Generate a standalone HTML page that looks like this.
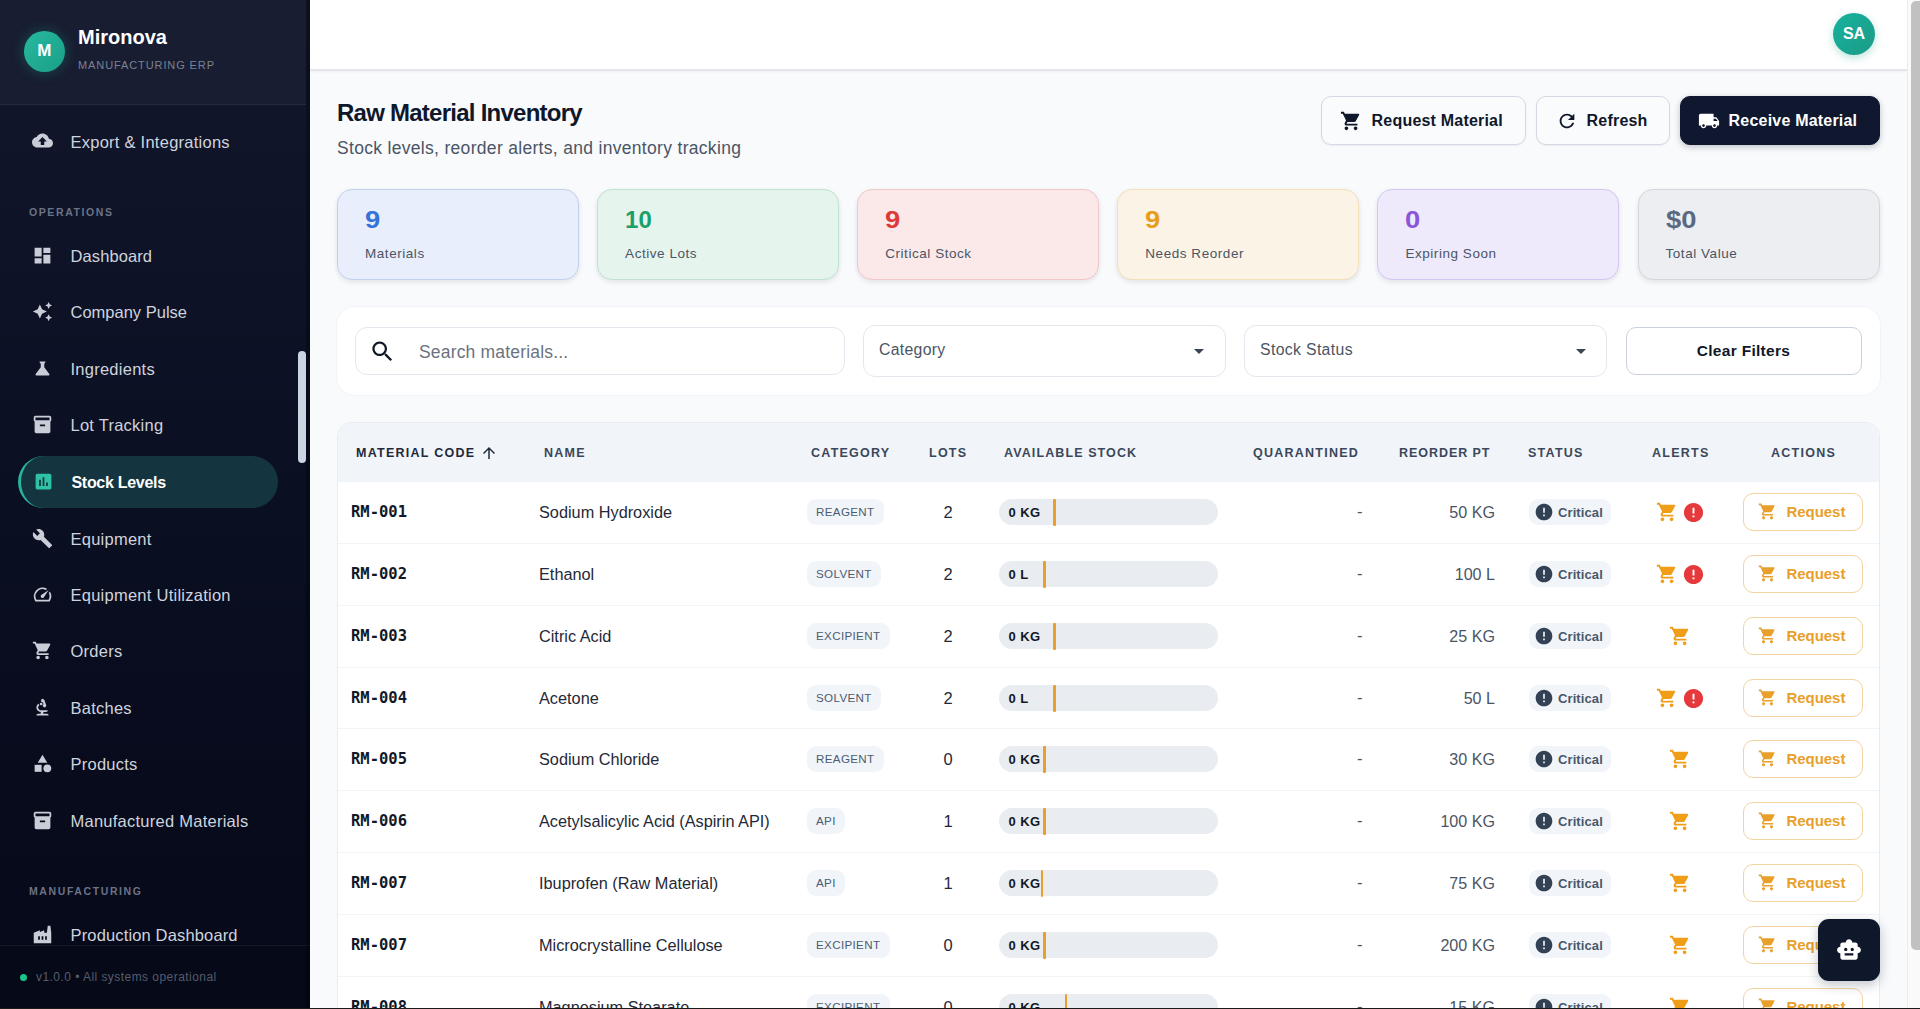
<!DOCTYPE html>
<html lang="en">
<head>
<meta charset="utf-8">
<title>Mironova - Raw Material Inventory</title>
<style>
*{box-sizing:border-box;margin:0;padding:0}
html,body{width:1920px;height:1009px;overflow:hidden;background:#f8fafc;font-family:"Liberation Sans",sans-serif;color:#0f172a}
svg{display:block}
.abs{position:absolute}
/* sidebar */
#side{position:absolute;left:0;top:0;width:309.5px;height:1009px;background:linear-gradient(180deg,#13182c 0%,#10152a 12%,#0d1226 30%,#080c1e 70%,#050918 100%);overflow:hidden}
#side:after{content:"";position:absolute;right:0;top:0;width:3.5px;height:1009px;background:rgba(0,0,0,.28)}
#side .hdr{position:absolute;left:0;top:0;width:306px;height:105px;background:#181d31;border-bottom:1.5px solid #232a3e}
#logo{position:absolute;left:24px;top:31px;width:40.5px;height:40.5px;border-radius:50%;background:linear-gradient(135deg,#27b9a0,#1a9f88);box-shadow:0 0 14px rgba(31,168,144,.35);color:#fff;font-weight:700;font-size:17px;line-height:40px;text-align:center}
#brand{position:absolute;left:78px;top:25px;font-size:20px;font-weight:700;color:#fff;line-height:24px;letter-spacing:0}
#brandsub{position:absolute;left:78px;top:58px;font-size:11px;color:#7a8296;line-height:14px;letter-spacing:.9px}
.nav{position:absolute;left:0;width:310px;height:52px}
.nav svg{position:absolute;left:31.5px;top:15px;width:21px;height:21px;fill:#c9cdd8}
.nav span{position:absolute;left:70.5px;top:14px;font-size:16.5px;line-height:24px;color:#cfd3dd;white-space:nowrap;letter-spacing:.25px}
.nav.act{left:18px;width:260px;border-radius:26px;background:#14353f;border-left:3px solid #2bb3a0}
.nav.act svg{left:12px;fill:#2fc2a6}
.nav.act span{left:50.5px;top:15px;color:#fff;font-weight:700;font-size:16px;letter-spacing:-.3px}
.sect{position:absolute;left:29px;font-size:10.5px;letter-spacing:1.6px;color:#6b7386;line-height:12px;font-weight:700}
#sfoot{position:absolute;left:0;top:945px;width:310px;height:64px;background:#060917;border-top:1px solid #141a2c}
#sfoot i{position:absolute;left:20px;top:28px;width:7px;height:7px;border-radius:50%;background:#19c58a}
#sfoot span{position:absolute;left:36px;top:24px;font-size:12px;line-height:14px;color:#555c6e;letter-spacing:.45px}
#sscroll{position:absolute;left:298px;top:351px;width:8px;height:112px;border-radius:4px;background:#cbd5e1}
/* topbar */
#top{position:absolute;left:310px;top:0;width:1597px;height:70.5px;background:#fff;border-bottom:2px solid #e4e6ea;box-shadow:0 1px 2px rgba(15,23,42,.04)}
#ava{position:absolute;left:1833px;top:12.5px;width:42px;height:42px;border-radius:50%;background:linear-gradient(135deg,#17b29c,#1b9b88);color:#fff;font-weight:700;font-size:16px;line-height:42px;text-align:center;box-shadow:0 3px 8px rgba(31,168,144,.3)}
#pscroll{position:absolute;left:1907px;top:0;width:13px;height:1009px;background:#fafafa;border-left:1px solid #ececec}
#pscroll i{position:absolute;left:3px;top:1px;width:10px;height:949px;border-radius:5px 0 0 5px;background:#c1c1c1}
/* heading */
h1{position:absolute;left:337px;top:97px;font-size:24px;line-height:32px;font-weight:700;letter-spacing:-.75px;color:#0f172a;white-space:nowrap}
#sub{position:absolute;left:337px;top:136px;font-size:17.5px;line-height:24px;color:#4b5565;white-space:nowrap;letter-spacing:.31px}
.btn{position:absolute;top:96px;height:48.5px;border-radius:10px;border:1.5px solid #d3d8e2;background:#fafbfd;box-shadow:0 1px 2px rgba(15,23,42,.05);font-size:16px;font-weight:700;color:#0f172a;line-height:47px;white-space:nowrap;letter-spacing:.2px}
.btn svg{position:absolute;top:12.5px;width:22px;height:22px;fill:#0f172a}
.btn span{position:absolute;margin-left:.6px}
.btn.dark{background:#101830;border-color:#101830;color:#fff;box-shadow:0 2px 6px rgba(15,23,42,.25)}
.btn.dark svg{fill:#fff}

/* cards */
.card{position:absolute;top:189px;width:242px;height:91px;border-radius:15px;border:1.5px solid;box-shadow:0 2px 5px rgba(15,23,42,.10)}
.card b{position:absolute;left:27px;top:15px;font-size:24px;line-height:30px;font-weight:700;transform:scaleX(1.14);transform-origin:0 50%}
.card span{position:absolute;left:27px;top:55px;font-size:13.5px;line-height:18px;color:#4b5565;letter-spacing:.55px;white-space:nowrap}
/* filters */
#filt{position:absolute;left:337px;top:307px;width:1543px;height:88px;border-radius:18px;background:#fff;box-shadow:0 0 0 1px rgba(226,232,240,.35)}
.inp{position:absolute;border:1px solid #e3e7ee;border-radius:12px;background:#fff}
.inp span{position:absolute;white-space:nowrap}
.inp svg{position:absolute}
/* table */
#tbl{position:absolute;left:337px;top:422px;width:1543px;height:600px;border-radius:14px 14px 0 0;background:#fff;border:1px solid #e8ecf2;overflow:hidden}
#thead{position:absolute;left:0;top:0;width:1543px;height:58.5px;background:#f1f5f9}
#thead span{position:absolute;top:22.5px;font-size:12.5px;line-height:14px;font-weight:700;letter-spacing:1.25px;color:#3b475a;white-space:nowrap}
#thead svg{position:absolute;left:142px;top:20.500px;width:18px;height:18px;fill:#1e293b}
.row{position:absolute;left:0;width:1543px;height:63px;border-bottom:1px solid #f1f4f8}
.row>*{position:absolute;white-space:nowrap}
.code{left:13px;top:21px;font-family:"DejaVu Sans Mono","Liberation Mono",monospace;font-weight:700;font-size:15.5px;line-height:20px;color:#111827}
.name{left:201px;top:20px;font-size:16.3px;line-height:22px;color:#1f2937;letter-spacing:0}
.cat{left:468.5px;top:18px;height:26px;border-radius:9px;background:#f1f5f9;padding:0 9.5px;font-size:11.6px;line-height:26px;color:#4b5b70;letter-spacing:.35px}
.lots{left:590px;width:40px;top:20px;text-align:center;font-size:16.5px;line-height:22px;color:#1f2937}
.bar{left:661px;top:18px;width:219px;height:26px;border-radius:13px;background:#e9ecf0}
.bar b{position:absolute;left:9.500px;top:.5px;font-size:13px;line-height:26px;font-weight:700;color:#111827;letter-spacing:.4px}
.bar i{position:absolute;top:-.5px;width:2.5px;height:27px;border-radius:1px;background:#e8a02b}
.q{left:1014.5px;width:10px;top:19px;text-align:right;font-size:16.5px;line-height:22px;color:#4b5565}
.ro{left:1037px;width:120px;top:20px;text-align:right;font-size:16.1px;line-height:22px;color:#4b5565}
.st{left:1191px;top:18px;width:82px;height:26px;border-radius:9px;background:#f1f5f9}
.st svg{position:absolute;left:4.500px;top:3px;width:20px;height:20px;fill:#334155}
.st span{position:absolute;left:29px;top:1px;font-size:13px;line-height:26px;color:#4a576a;font-weight:700;letter-spacing:.1px}
.al{top:20px;width:22px;height:22px}
.rq{left:1405px;top:12.300px;width:120px;height:37.500px;border-radius:10px;border:1.5px solid #f3d3a0;background:#fff}
.rq svg{position:absolute;left:13.700px;top:8px;width:19px;height:19px;fill:#e8a02b}
.rq span{position:absolute;left:42.500px;top:1px;font-size:15px;line-height:34.500px;font-weight:700;color:#e8a02b;letter-spacing:-.05px}
#fab{position:absolute;left:1818px;top:919px;width:62px;height:62px;border-radius:11px;background:#0f172a;box-shadow:0 4px 12px rgba(15,23,42,.25)}
#fab svg{position:absolute;left:18px;top:18px;width:26px;height:26px;fill:#fff}
#bot{position:absolute;left:0;top:1007.5px;width:1920px;height:1.500px;background:#1a1a1a}
</style>
</head>
<body>
<div id="side">
  <div class="hdr">
    <div id="logo">M</div>
    <div id="brand">Mironova</div>
    <div id="brandsub">MANUFACTURING ERP</div>
  </div>
  <div class="nav" style="top:115px"><svg viewBox="0 0 24 24"><path d="M19.35 10.04C18.67 6.59 15.64 4 12 4 9.11 4 6.6 5.64 5.35 8.04 2.34 8.36 0 10.91 0 14c0 3.31 2.69 6 6 6h13c2.76 0 5-2.24 5-5 0-2.64-2.05-4.78-4.65-4.96zM14 13v4h-4v-4H7l5-5 5 5h-3z"/></svg><span style="top:15px">Export &amp; Integrations</span></div>
  <div class="sect" style="top:206px">OPERATIONS</div>
  <div class="nav" style="top:230px"><svg viewBox="0 0 24 24"><path d="M3 13h8V3H3v10zm0 8h8v-6H3v6zm10 0h8V11h-8v10zm0-18v6h8V3h-8z"/></svg><span style="letter-spacing:.1px">Dashboard</span></div>
  <div class="nav" style="top:286px"><svg viewBox="0 0 24 24"><path d="M19 9l1.25-2.75L23 5l-2.75-1.25L19 1l-1.25 2.75L15 5l2.75 1.25L19 9zm-7.5.5L9 4 6.5 9.5 1 12l5.5 2.5L9 20l2.5-5.5L17 12l-5.5-2.5zM19 15l-1.25 2.75L15 19l2.75 1.25L19 23l1.25-2.75L23 19l-2.75-1.25L19 15z"/></svg><span style="letter-spacing:0">Company Pulse</span></div>
  <div class="nav" style="top:343px"><svg viewBox="0 0 24 24"><path d="M19.8 18.4L14 10.67V6.5l1.35-1.69c.26-.33.03-.81-.39-.81H9.04c-.42 0-.65.48-.39.81L10 6.5v4.17L4.2 18.4c-.49.66-.02 1.6.8 1.6h14c.82 0 1.29-.94.8-1.6z"/></svg><span>Ingredients</span></div>
  <div class="nav" style="top:399px"><svg viewBox="0 0 24 24"><path d="M20 2H4c-1 0-2 .9-2 2v3.010c0 .72.43 1.340 1 1.690V20c0 1.100 1.100 2 2 2h14c.9 0 2-.9 2-2V8.700c.57-.350 1-.970 1-1.690V4c0-1.100-1-2-2-2zm-5 12H9v-2h6v2zm5-7H4V4h16v3z"/></svg><span>Lot Tracking</span></div>
  <div class="nav act" style="top:456px"><svg viewBox="0 0 24 24"><path d="M19 3H5c-1.100 0-2 .9-2 2v14c0 1.100.9 2 2 2h14c1.100 0 2-.9 2-2V5c0-1.100-.9-2-2-2zM9 17H7v-7h2v7zm4 0h-2V7h2v10zm4 0h-2v-4h2v4z"/></svg><span>Stock Levels</span></div>
  <div class="nav" style="top:513px"><svg viewBox="0 0 24 24"><path d="M22.700 19l-9.100-9.100c.9-2.300.4-5-1.500-6.900-2-2-5-2.400-7.400-1.300L9 6 6 9 1.600 4.700C.4 7.100.9 10.100 2.900 12.100c1.900 1.900 4.600 2.400 6.900 1.500l9.100 9.100c.4.4 1 .4 1.400 0l2.300-2.300c.5-.4.5-1.100.1-1.400z"/></svg><span>Equipment</span></div>
  <div class="nav" style="top:569px"><svg viewBox="0 0 24 24"><path d="M20.380 8.570l-1.230 1.850a8 8 0 0 1-.22 7.580H5.070A8 8 0 0 1 15.580 6.850l1.850-1.230A10 10 0 0 0 3.350 19a2 2 0 0 0 1.720 1h13.850a2 2 0 0 0 1.740-1 10 10 0 0 0-.27-10.440zm-9.790 6.840a2 2 0 0 0 2.830 0l5.660-8.490-8.490 5.660a2 2 0 0 0 0 2.830z"/></svg><span>Equipment Utilization</span></div>
  <div class="nav" style="top:625px"><svg viewBox="0 0 24 24"><path d="M7 18c-1.100 0-1.990.9-1.990 2S5.900 22 7 22s2-.9 2-2-.9-2-2-2zM1 2v2h2l3.600 7.590-1.350 2.450c-.16.28-.25.61-.25.96 0 1.100.9 2 2 2h12v-2H7.420c-.14 0-.25-.11-.25-.25l.03-.12.9-1.630h7.450c.75 0 1.410-.41 1.750-1.030l3.580-6.490c.08-.14.12-.31.12-.48 0-.55-.45-1-1-1H5.210l-.94-2H1zm16 16c-1.100 0-1.990.9-1.990 2s.89 2 1.990 2 2-.9 2-2-.9-2-2-2z"/></svg><span>Orders</span></div>
  <div class="nav" style="top:682px"><svg viewBox="0 0 24 24"><path d="M7 19c-1.100 0-2 .9-2 2h14c0-1.100-.9-2-2-2h-4v-2h3c1.100 0 2-.9 2-2h-8c-1.660 0-3-1.340-3-3 0-1.090.59-2.040 1.460-2.560C8.170 9.030 8 8.540 8 8c0-.21.04-.42.09-.62C6.280 8.130 5 9.920 5 12c0 2.760 2.240 5 5 5v2H7z"/><path d="M10.560 5.510C11.910 5.540 13 6.640 13 8c0 .75-.33 1.410-.85 1.870l.59 1.620.94-.34.34.94 1.880-.68-.34-.94.94-.34-2.740-7.520-.94.34-.34-.94-1.880.68.340.94-.94.340.56 1.540z"/><circle cx="10.500" cy="8" r="1.500"/></svg><span>Batches</span></div>
  <div class="nav" style="top:738px"><svg viewBox="0 0 24 24"><path d="M12 2l-5.500 9h11z"/><circle cx="17.500" cy="17.500" r="4.500"/><path d="M3 13.500h8v8H3z"/></svg><span>Products</span></div>
  <div class="nav" style="top:795px"><svg viewBox="0 0 24 24"><path d="M20 2H4c-1 0-2 .9-2 2v3.010c0 .72.43 1.340 1 1.690V20c0 1.100 1.100 2 2 2h14c.9 0 2-.9 2-2V8.700c.57-.350 1-.970 1-1.690V4c0-1.100-1-2-2-2zm-5 12H9v-2h6v2zm5-7H4V4h16v3z"/></svg><span>Manufactured Materials</span></div>
  <div class="sect" style="top:885px">MANUFACTURING</div>
  <div class="nav" style="top:909px"><svg viewBox="0 0 24 24"><path d="M22 22H2V10l7-3v2l5-2v3h3l1-8h3l1 8v12zM17 14h-2v4h2v-4zm-4 0h-2v4h2v-4zm-4 0H7v4h2v-4z"/></svg><span style="letter-spacing:.15px">Production Dashboard</span></div>
  <div id="sscroll"></div>
  <div id="sfoot"><i></i><span>v1.0.0 • All systems operational</span></div>
</div>

<div id="top"></div>
<div id="ava">SA</div>

<h1>Raw Material Inventory</h1>
<div id="sub">Stock levels, reorder alerts, and inventory tracking</div>

<div class="btn" style="left:1321px;width:205px"><svg style="left:18px" viewBox="0 0 24 24"><path d="M7 18c-1.100 0-1.990.9-1.990 2S5.900 22 7 22s2-.9 2-2-.9-2-2-2zM1 2v2h2l3.600 7.590-1.350 2.450c-.16.28-.25.61-.25.96 0 1.100.9 2 2 2h12v-2H7.420c-.14 0-.25-.11-.25-.25l.03-.12.9-1.630h7.450c.75 0 1.410-.41 1.750-1.030l3.580-6.490c.08-.14.12-.31.12-.48 0-.55-.45-1-1-1H5.210l-.94-2H1zm16 16c-1.100 0-1.990.9-1.990 2s.89 2 1.990 2 2-.9 2-2-.9-2-2-2z"/></svg><span style="left:49px">Request Material</span></div>
<div class="btn" style="left:1536px;width:134px"><svg style="left:19px" viewBox="0 0 24 24"><path d="M17.650 6.350C16.200 4.900 14.210 4 12 4c-4.420 0-7.990 3.580-7.990 8s3.570 8 7.990 8c3.730 0 6.840-2.550 7.730-6h-2.080c-.82 2.330-3.040 4-5.650 4-3.310 0-6-2.690-6-6s2.690-6 6-6c1.660 0 3.140.69 4.220 1.780L13 11h7V4l-2.350 2.350z"/></svg><span style="left:49px">Refresh</span></div>
<div class="btn dark" style="left:1680px;width:200px"><svg style="left:17px" viewBox="0 0 24 24"><path d="M20 8h-3V4H3c-1.100 0-2 .9-2 2v11h2c0 1.660 1.340 3 3 3s3-1.340 3-3h6c0 1.660 1.340 3 3 3s3-1.340 3-3h2v-5l-3-4zM6 18.500c-.83 0-1.500-.67-1.500-1.500s.67-1.500 1.500-1.500 1.500.67 1.500 1.500-.67 1.500-1.500 1.500zm13.500-9l1.960 2.500H17V9.500h2.500zm-1.500 9c-.83 0-1.500-.67-1.500-1.500s.67-1.500 1.500-1.500 1.500.67 1.500 1.500-.67 1.500-1.500 1.500z"/></svg><span style="left:47px">Receive Material</span></div>

<div class="card" style="left:337px;width:242px;background:#e8eefb;border-color:#c3d1f0"><b style="color:#3572db">9</b><span>Materials</span></div>
<div class="card" style="left:597.1px;width:242px;background:#e6f4ee;border-color:#bfe2d1"><b style="color:#1aa06a;transform:none">10</b><span>Active Lots</span></div>
<div class="card" style="left:857.2px;width:242px;background:#fbe8e9;border-color:#f3c6c8"><b style="color:#dc3a3a">9</b><span>Critical Stock</span></div>
<div class="card" style="left:1117.3px;width:242px;background:#fbf3e6;border-color:#f3dfba"><b style="color:#e89c1c">9</b><span>Needs Reorder</span></div>
<div class="card" style="left:1377.4px;width:242px;background:#eee9fb;border-color:#d3c7f3"><b style="color:#8a55d8">0</b><span>Expiring Soon</span></div>
<div class="card" style="left:1637.5px;width:242px;background:#eceef1;border-color:#d3d7dd"><b style="color:#5a6881">$0</b><span>Total Value</span></div>

<div id="filt">
<div class="inp" style="left:18px;top:20px;width:490px;height:48px"><svg style="left:13.400px;top:10.200px;width:27px;height:27px;fill:#111827" viewBox="0 0 24 24"><path d="M15.500 14h-.79l-.28-.27C15.410 12.590 16 11.110 16 9.500 16 5.910 13.090 3 9.500 3S3 5.910 3 9.500 5.910 16 9.500 16c1.610 0 3.090-.59 4.230-1.570l.27.28v.79l5 4.990L20.490 19l-4.990-5zm-6 0C7.010 14 5 11.990 5 9.500S7.010 5 9.500 5 14 7.010 14 9.500 11.990 14 9.500 14z"/></svg><span style="left:63px;top:11.500px;font-size:17.5px;line-height:24px;color:#6b7280;letter-spacing:.18px">Search materials...</span></div>
<div class="inp" style="left:526px;top:18px;width:363px;height:52px"><span style="left:15px;top:12.500px;font-size:15.8px;line-height:22px;color:#4b5565;letter-spacing:.3px">Category</span><svg style="left:323px;top:13px;width:24px;height:24px;fill:#3b4555" viewBox="0 0 24 24"><path d="M7 10l5 5 5-5z"/></svg></div>
<div class="inp" style="left:907px;top:18px;width:363px;height:52px"><span style="left:15px;top:12.500px;font-size:15.8px;line-height:22px;color:#4b5565;letter-spacing:.35px">Stock Status</span><svg style="left:324px;top:13px;width:24px;height:24px;fill:#3b4555" viewBox="0 0 24 24"><path d="M7 10l5 5 5-5z"/></svg></div>
<div class="inp" style="left:1289px;top:20px;width:236px;height:48px;border:1.5px solid #cbd1dc;border-radius:10px"><span style="left:0;width:233px;text-align:center;top:12px;font-size:15.5px;line-height:22px;font-weight:700;color:#0f172a;letter-spacing:.3px">Clear Filters</span></div>
</div>

<div id="tbl">
<div id="thead"><span style="left:18px;color:#1e293b">MATERIAL CODE</span><svg viewBox="0 0 24 24"><path d="M4 12l1.410 1.410L11 7.830V20h2V7.830l5.580 5.590L20 12l-8-8-8 8z"/></svg><span style="left:206px">NAME</span><span style="left:473px">CATEGORY</span><span style="left:591px">LOTS</span><span style="left:666px;letter-spacing:1.1px">AVAILABLE STOCK</span><span style="left:915px">QUARANTINED</span><span style="left:1061px;letter-spacing:.95px">REORDER PT</span><span style="left:1190px">STATUS</span><span style="left:1314px">ALERTS</span><span style="left:1433px">ACTIONS</span></div>
<div class="row" style="top:58px;height:63px"><span class="code">RM-001</span><span class="name">Sodium Hydroxide</span><span class="cat">REAGENT</span><span class="lots">2</span><div class="bar"><b>0 KG</b><i style="left:54px"></i></div><span class="q">-</span><span class="ro">50 KG</span><div class="st"><svg viewBox="0 0 24 24"><path d="M12 2C6.480 2 2 6.480 2 12s4.480 10 10 10 10-4.480 10-10S17.520 2 12 2zm1 15h-2v-2h2v2zm0-4h-2V7h2v6z"/></svg><span>Critical</span></div><svg class="al" style="left:1317.500px;fill:#f09d18" viewBox="0 0 24 24"><path d="M7 18c-1.100 0-1.990.9-1.990 2S5.900 22 7 22s2-.9 2-2-.9-2-2-2zM1 2v2h2l3.600 7.590-1.350 2.450c-.16.28-.25.61-.25.96 0 1.100.9 2 2 2h12v-2H7.420c-.14 0-.25-.11-.25-.25l.03-.12.9-1.630h7.450c.75 0 1.410-.41 1.750-1.030l3.580-6.490c.08-.14.12-.31.12-.48 0-.55-.45-1-1-1H5.210l-.94-2H1zm16 16c-1.100 0-1.990.9-1.990 2s.89 2 1.990 2 2-.9 2-2-.9-2-2-2z"/></svg><svg class="al" style="left:1344px;width:23px;height:23px;top:19.500px;fill:#e5393b" viewBox="0 0 24 24"><path d="M12 2C6.480 2 2 6.480 2 12s4.480 10 10 10 10-4.480 10-10S17.520 2 12 2zm1 15h-2v-2h2v2zm0-4h-2V7h2v6z"/></svg><div class="rq"><svg viewBox="0 0 24 24"><path d="M7 18c-1.100 0-1.990.9-1.990 2S5.900 22 7 22s2-.9 2-2-.9-2-2-2zM1 2v2h2l3.600 7.590-1.350 2.450c-.16.28-.25.61-.25.96 0 1.100.9 2 2 2h12v-2H7.420c-.14 0-.25-.11-.25-.25l.03-.12.9-1.630h7.450c.75 0 1.410-.41 1.750-1.030l3.580-6.490c.08-.14.12-.31.12-.48 0-.55-.45-1-1-1H5.210l-.94-2H1zm16 16c-1.100 0-1.990.9-1.990 2s.89 2 1.990 2 2-.9 2-2-.9-2-2-2z"/></svg><span>Request</span></div></div>
<div class="row" style="top:120px;height:63px"><span class="code">RM-002</span><span class="name">Ethanol</span><span class="cat">SOLVENT</span><span class="lots">2</span><div class="bar"><b>0 L</b><i style="left:44px"></i></div><span class="q">-</span><span class="ro">100 L</span><div class="st"><svg viewBox="0 0 24 24"><path d="M12 2C6.480 2 2 6.480 2 12s4.480 10 10 10 10-4.480 10-10S17.520 2 12 2zm1 15h-2v-2h2v2zm0-4h-2V7h2v6z"/></svg><span>Critical</span></div><svg class="al" style="left:1317.500px;fill:#f09d18" viewBox="0 0 24 24"><path d="M7 18c-1.100 0-1.990.9-1.990 2S5.900 22 7 22s2-.9 2-2-.9-2-2-2zM1 2v2h2l3.600 7.590-1.350 2.450c-.16.28-.25.61-.25.96 0 1.100.9 2 2 2h12v-2H7.420c-.14 0-.25-.11-.25-.25l.03-.12.9-1.630h7.450c.75 0 1.410-.41 1.750-1.030l3.580-6.490c.08-.14.12-.31.12-.48 0-.55-.45-1-1-1H5.210l-.94-2H1zm16 16c-1.100 0-1.990.9-1.990 2s.89 2 1.990 2 2-.9 2-2-.9-2-2-2z"/></svg><svg class="al" style="left:1344px;width:23px;height:23px;top:19.500px;fill:#e5393b" viewBox="0 0 24 24"><path d="M12 2C6.480 2 2 6.480 2 12s4.480 10 10 10 10-4.480 10-10S17.520 2 12 2zm1 15h-2v-2h2v2zm0-4h-2V7h2v6z"/></svg><div class="rq"><svg viewBox="0 0 24 24"><path d="M7 18c-1.100 0-1.990.9-1.990 2S5.900 22 7 22s2-.9 2-2-.9-2-2-2zM1 2v2h2l3.600 7.590-1.350 2.450c-.16.28-.25.61-.25.96 0 1.100.9 2 2 2h12v-2H7.420c-.14 0-.25-.11-.25-.25l.03-.12.9-1.630h7.450c.75 0 1.410-.41 1.750-1.030l3.580-6.490c.08-.14.12-.31.12-.48 0-.55-.45-1-1-1H5.210l-.94-2H1zm16 16c-1.100 0-1.990.9-1.990 2s.89 2 1.990 2 2-.9 2-2-.9-2-2-2z"/></svg><span>Request</span></div></div>
<div class="row" style="top:182px;height:63px"><span class="code">RM-003</span><span class="name">Citric Acid</span><span class="cat">EXCIPIENT</span><span class="lots">2</span><div class="bar"><b>0 KG</b><i style="left:54px"></i></div><span class="q">-</span><span class="ro">25 KG</span><div class="st"><svg viewBox="0 0 24 24"><path d="M12 2C6.480 2 2 6.480 2 12s4.480 10 10 10 10-4.480 10-10S17.520 2 12 2zm1 15h-2v-2h2v2zm0-4h-2V7h2v6z"/></svg><span>Critical</span></div><svg class="al" style="left:1331px;fill:#f09d18" viewBox="0 0 24 24"><path d="M7 18c-1.100 0-1.990.9-1.990 2S5.900 22 7 22s2-.9 2-2-.9-2-2-2zM1 2v2h2l3.600 7.590-1.350 2.450c-.16.28-.25.61-.25.96 0 1.100.9 2 2 2h12v-2H7.420c-.14 0-.25-.11-.25-.25l.03-.12.9-1.630h7.450c.75 0 1.410-.41 1.750-1.030l3.580-6.490c.08-.14.12-.31.12-.48 0-.55-.45-1-1-1H5.210l-.94-2H1zm16 16c-1.100 0-1.990.9-1.990 2s.89 2 1.990 2 2-.9 2-2-.9-2-2-2z"/></svg><div class="rq"><svg viewBox="0 0 24 24"><path d="M7 18c-1.100 0-1.990.9-1.990 2S5.900 22 7 22s2-.9 2-2-.9-2-2-2zM1 2v2h2l3.600 7.590-1.350 2.450c-.16.28-.25.61-.25.96 0 1.100.9 2 2 2h12v-2H7.420c-.14 0-.25-.11-.25-.25l.03-.12.9-1.630h7.450c.75 0 1.410-.41 1.750-1.030l3.580-6.490c.08-.14.12-.31.12-.48 0-.55-.45-1-1-1H5.210l-.94-2H1zm16 16c-1.100 0-1.990.9-1.990 2s.89 2 1.990 2 2-.9 2-2-.9-2-2-2z"/></svg><span>Request</span></div></div>
<div class="row" style="top:244px;height:62px"><span class="code">RM-004</span><span class="name">Acetone</span><span class="cat">SOLVENT</span><span class="lots">2</span><div class="bar"><b>0 L</b><i style="left:54px"></i></div><span class="q">-</span><span class="ro">50 L</span><div class="st"><svg viewBox="0 0 24 24"><path d="M12 2C6.480 2 2 6.480 2 12s4.480 10 10 10 10-4.480 10-10S17.520 2 12 2zm1 15h-2v-2h2v2zm0-4h-2V7h2v6z"/></svg><span>Critical</span></div><svg class="al" style="left:1317.500px;fill:#f09d18" viewBox="0 0 24 24"><path d="M7 18c-1.100 0-1.990.9-1.990 2S5.900 22 7 22s2-.9 2-2-.9-2-2-2zM1 2v2h2l3.600 7.590-1.350 2.450c-.16.28-.25.61-.25.96 0 1.100.9 2 2 2h12v-2H7.420c-.14 0-.25-.11-.25-.25l.03-.12.9-1.630h7.450c.75 0 1.410-.41 1.750-1.030l3.580-6.490c.08-.14.12-.31.12-.48 0-.55-.45-1-1-1H5.210l-.94-2H1zm16 16c-1.100 0-1.990.9-1.990 2s.89 2 1.990 2 2-.9 2-2-.9-2-2-2z"/></svg><svg class="al" style="left:1344px;width:23px;height:23px;top:19.500px;fill:#e5393b" viewBox="0 0 24 24"><path d="M12 2C6.480 2 2 6.480 2 12s4.480 10 10 10 10-4.480 10-10S17.520 2 12 2zm1 15h-2v-2h2v2zm0-4h-2V7h2v6z"/></svg><div class="rq"><svg viewBox="0 0 24 24"><path d="M7 18c-1.100 0-1.990.9-1.990 2S5.900 22 7 22s2-.9 2-2-.9-2-2-2zM1 2v2h2l3.600 7.590-1.350 2.450c-.16.28-.25.61-.25.96 0 1.100.9 2 2 2h12v-2H7.420c-.14 0-.25-.11-.25-.25l.03-.12.9-1.630h7.450c.75 0 1.410-.41 1.750-1.030l3.580-6.490c.08-.14.12-.31.12-.48 0-.55-.45-1-1-1H5.210l-.94-2H1zm16 16c-1.100 0-1.990.9-1.990 2s.89 2 1.990 2 2-.9 2-2-.9-2-2-2z"/></svg><span>Request</span></div></div>
<div class="row" style="top:305px;height:63px"><span class="code">RM-005</span><span class="name">Sodium Chloride</span><span class="cat">REAGENT</span><span class="lots">0</span><div class="bar"><b>0 KG</b><i style="left:44px"></i></div><span class="q">-</span><span class="ro">30 KG</span><div class="st"><svg viewBox="0 0 24 24"><path d="M12 2C6.480 2 2 6.480 2 12s4.480 10 10 10 10-4.480 10-10S17.520 2 12 2zm1 15h-2v-2h2v2zm0-4h-2V7h2v6z"/></svg><span>Critical</span></div><svg class="al" style="left:1331px;fill:#f09d18" viewBox="0 0 24 24"><path d="M7 18c-1.100 0-1.990.9-1.990 2S5.900 22 7 22s2-.9 2-2-.9-2-2-2zM1 2v2h2l3.600 7.590-1.350 2.450c-.16.28-.25.61-.25.96 0 1.100.9 2 2 2h12v-2H7.420c-.14 0-.25-.11-.25-.25l.03-.12.9-1.630h7.450c.75 0 1.410-.41 1.750-1.030l3.580-6.490c.08-.14.12-.31.12-.48 0-.55-.45-1-1-1H5.210l-.94-2H1zm16 16c-1.100 0-1.990.9-1.990 2s.89 2 1.990 2 2-.9 2-2-.9-2-2-2z"/></svg><div class="rq"><svg viewBox="0 0 24 24"><path d="M7 18c-1.100 0-1.990.9-1.990 2S5.900 22 7 22s2-.9 2-2-.9-2-2-2zM1 2v2h2l3.600 7.590-1.350 2.450c-.16.28-.25.61-.25.96 0 1.100.9 2 2 2h12v-2H7.420c-.14 0-.25-.11-.25-.25l.03-.12.9-1.630h7.450c.75 0 1.410-.41 1.750-1.030l3.580-6.490c.08-.14.12-.31.12-.48 0-.55-.45-1-1-1H5.210l-.94-2H1zm16 16c-1.100 0-1.990.9-1.990 2s.89 2 1.990 2 2-.9 2-2-.9-2-2-2z"/></svg><span>Request</span></div></div>
<div class="row" style="top:367px;height:63px"><span class="code">RM-006</span><span class="name">Acetylsalicylic Acid (Aspirin API)</span><span class="cat">API</span><span class="lots">1</span><div class="bar"><b>0 KG</b><i style="left:44px"></i></div><span class="q">-</span><span class="ro">100 KG</span><div class="st"><svg viewBox="0 0 24 24"><path d="M12 2C6.480 2 2 6.480 2 12s4.480 10 10 10 10-4.480 10-10S17.520 2 12 2zm1 15h-2v-2h2v2zm0-4h-2V7h2v6z"/></svg><span>Critical</span></div><svg class="al" style="left:1331px;fill:#f09d18" viewBox="0 0 24 24"><path d="M7 18c-1.100 0-1.990.9-1.990 2S5.900 22 7 22s2-.9 2-2-.9-2-2-2zM1 2v2h2l3.600 7.590-1.350 2.450c-.16.28-.25.61-.25.96 0 1.100.9 2 2 2h12v-2H7.420c-.14 0-.25-.11-.25-.25l.03-.12.9-1.630h7.450c.75 0 1.410-.41 1.750-1.030l3.580-6.490c.08-.14.12-.31.12-.48 0-.55-.45-1-1-1H5.210l-.94-2H1zm16 16c-1.100 0-1.990.9-1.990 2s.89 2 1.990 2 2-.9 2-2-.9-2-2-2z"/></svg><div class="rq"><svg viewBox="0 0 24 24"><path d="M7 18c-1.100 0-1.990.9-1.990 2S5.900 22 7 22s2-.9 2-2-.9-2-2-2zM1 2v2h2l3.600 7.590-1.350 2.450c-.16.28-.25.61-.25.96 0 1.100.9 2 2 2h12v-2H7.420c-.14 0-.25-.11-.25-.25l.03-.12.9-1.630h7.450c.75 0 1.410-.41 1.750-1.030l3.580-6.490c.08-.14.12-.31.12-.48 0-.55-.45-1-1-1H5.210l-.94-2H1zm16 16c-1.100 0-1.990.9-1.990 2s.89 2 1.990 2 2-.9 2-2-.9-2-2-2z"/></svg><span>Request</span></div></div>
<div class="row" style="top:429px;height:63px"><span class="code">RM-007</span><span class="name">Ibuprofen (Raw Material)</span><span class="cat">API</span><span class="lots">1</span><div class="bar"><b>0 KG</b><i style="left:41.5px"></i></div><span class="q">-</span><span class="ro">75 KG</span><div class="st"><svg viewBox="0 0 24 24"><path d="M12 2C6.480 2 2 6.480 2 12s4.480 10 10 10 10-4.480 10-10S17.520 2 12 2zm1 15h-2v-2h2v2zm0-4h-2V7h2v6z"/></svg><span>Critical</span></div><svg class="al" style="left:1331px;fill:#f09d18" viewBox="0 0 24 24"><path d="M7 18c-1.100 0-1.990.9-1.990 2S5.900 22 7 22s2-.9 2-2-.9-2-2-2zM1 2v2h2l3.600 7.590-1.350 2.450c-.16.28-.25.61-.25.96 0 1.100.9 2 2 2h12v-2H7.420c-.14 0-.25-.11-.25-.25l.03-.12.9-1.630h7.450c.75 0 1.410-.41 1.750-1.030l3.580-6.490c.08-.14.12-.31.12-.48 0-.55-.45-1-1-1H5.210l-.94-2H1zm16 16c-1.100 0-1.990.9-1.990 2s.89 2 1.990 2 2-.9 2-2-.9-2-2-2z"/></svg><div class="rq"><svg viewBox="0 0 24 24"><path d="M7 18c-1.100 0-1.990.9-1.990 2S5.900 22 7 22s2-.9 2-2-.9-2-2-2zM1 2v2h2l3.600 7.590-1.350 2.450c-.16.28-.25.61-.25.96 0 1.100.9 2 2 2h12v-2H7.420c-.14 0-.25-.11-.25-.25l.03-.12.9-1.630h7.450c.75 0 1.410-.41 1.750-1.030l3.580-6.490c.08-.14.12-.31.12-.48 0-.55-.45-1-1-1H5.210l-.94-2H1zm16 16c-1.100 0-1.990.9-1.990 2s.89 2 1.990 2 2-.9 2-2-.9-2-2-2z"/></svg><span>Request</span></div></div>
<div class="row" style="top:491px;height:63px"><span class="code">RM-007</span><span class="name">Microcrystalline Cellulose</span><span class="cat">EXCIPIENT</span><span class="lots">0</span><div class="bar"><b>0 KG</b><i style="left:44px"></i></div><span class="q">-</span><span class="ro">200 KG</span><div class="st"><svg viewBox="0 0 24 24"><path d="M12 2C6.480 2 2 6.480 2 12s4.480 10 10 10 10-4.480 10-10S17.520 2 12 2zm1 15h-2v-2h2v2zm0-4h-2V7h2v6z"/></svg><span>Critical</span></div><svg class="al" style="left:1331px;fill:#f09d18" viewBox="0 0 24 24"><path d="M7 18c-1.100 0-1.990.9-1.990 2S5.900 22 7 22s2-.9 2-2-.9-2-2-2zM1 2v2h2l3.600 7.590-1.350 2.450c-.16.28-.25.61-.25.96 0 1.100.9 2 2 2h12v-2H7.420c-.14 0-.25-.11-.25-.25l.03-.12.9-1.630h7.450c.75 0 1.410-.41 1.750-1.030l3.580-6.490c.08-.14.12-.31.12-.48 0-.55-.45-1-1-1H5.210l-.94-2H1zm16 16c-1.100 0-1.990.9-1.990 2s.89 2 1.990 2 2-.9 2-2-.9-2-2-2z"/></svg><div class="rq"><svg viewBox="0 0 24 24"><path d="M7 18c-1.100 0-1.990.9-1.990 2S5.900 22 7 22s2-.9 2-2-.9-2-2-2zM1 2v2h2l3.600 7.590-1.350 2.450c-.16.28-.25.61-.25.96 0 1.100.9 2 2 2h12v-2H7.420c-.14 0-.25-.11-.25-.25l.03-.12.9-1.630h7.450c.75 0 1.410-.41 1.750-1.030l3.580-6.490c.08-.14.12-.31.12-.48 0-.55-.45-1-1-1H5.210l-.94-2H1zm16 16c-1.100 0-1.990.9-1.990 2s.89 2 1.990 2 2-.9 2-2-.9-2-2-2z"/></svg><span>Request</span></div></div>
<div class="row" style="top:553px;height:62px"><span class="code">RM-008</span><span class="name">Magnesium Stearate</span><span class="cat">EXCIPIENT</span><span class="lots">0</span><div class="bar"><b>0 KG</b><i style="left:65.8px"></i></div><span class="q">-</span><span class="ro">15 KG</span><div class="st"><svg viewBox="0 0 24 24"><path d="M12 2C6.480 2 2 6.480 2 12s4.480 10 10 10 10-4.480 10-10S17.520 2 12 2zm1 15h-2v-2h2v2zm0-4h-2V7h2v6z"/></svg><span>Critical</span></div><svg class="al" style="left:1331px;fill:#f09d18" viewBox="0 0 24 24"><path d="M7 18c-1.100 0-1.990.9-1.990 2S5.900 22 7 22s2-.9 2-2-.9-2-2-2zM1 2v2h2l3.600 7.590-1.350 2.450c-.16.28-.25.61-.25.96 0 1.100.9 2 2 2h12v-2H7.420c-.14 0-.25-.11-.25-.25l.03-.12.9-1.630h7.450c.75 0 1.410-.41 1.750-1.030l3.580-6.490c.08-.14.12-.31.12-.48 0-.55-.45-1-1-1H5.210l-.94-2H1zm16 16c-1.100 0-1.990.9-1.990 2s.89 2 1.990 2 2-.9 2-2-.9-2-2-2z"/></svg><div class="rq"><svg viewBox="0 0 24 24"><path d="M7 18c-1.100 0-1.990.9-1.990 2S5.900 22 7 22s2-.9 2-2-.9-2-2-2zM1 2v2h2l3.600 7.590-1.350 2.450c-.16.28-.25.61-.25.96 0 1.100.9 2 2 2h12v-2H7.420c-.14 0-.25-.11-.25-.25l.03-.12.9-1.630h7.450c.75 0 1.410-.41 1.750-1.030l3.580-6.490c.08-.14.12-.31.12-.48 0-.55-.45-1-1-1H5.210l-.94-2H1zm16 16c-1.100 0-1.990.9-1.990 2s.89 2 1.990 2 2-.9 2-2-.9-2-2-2z"/></svg><span>Request</span></div></div>
</div>

<div id="pscroll"><i></i></div>
<div id="fab"><svg viewBox="0 0 24 24"><path d="M20 9V7c0-1.100-.9-2-2-2h-3c0-1.660-1.340-3-3-3S9 3.340 9 5H6c-1.100 0-2 .9-2 2v2c-1.660 0-3 1.340-3 3s1.340 3 3 3v4c0 1.100.9 2 2 2h12c1.100 0 2-.9 2-2v-4c1.660 0 3-1.340 3-3s-1.340-3-3-3zM7.500 11.500c0-.83.67-1.500 1.500-1.500s1.500.67 1.500 1.500S9.830 13 9 13s-1.500-.67-1.500-1.500zM16 17H8v-2h8v2zm-1-4c-.83 0-1.500-.67-1.500-1.500S14.170 10 15 10s1.500.67 1.500 1.500S15.830 13 15 13z"/></svg></div>
<div id="bot"></div>

</body>
</html>
